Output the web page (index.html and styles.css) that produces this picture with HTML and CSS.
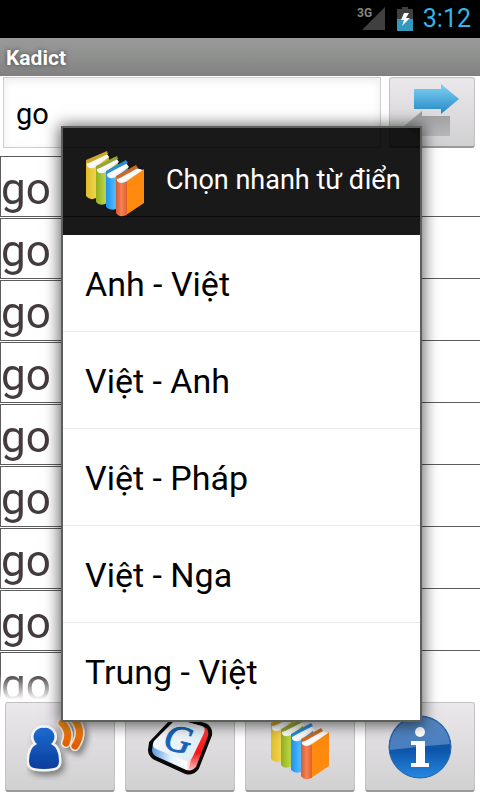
FILE: index.html
```
<!DOCTYPE html>
<html lang="vi">
<head>
    <meta charset="UTF-8">
    <meta name="viewport" content="width=device-width, initial-scale=1.0">
    <title>Kadict</title>
    <link rel="stylesheet" href="styles.css">
</head>
<body>
    <svg class="defs" aria-hidden="true">
        <defs>
            <linearGradient id="yellow"><stop offset="0" stop-color="#dfbd29"/><stop offset="0.4" stop-color="#f0d24c"/><stop offset="1" stop-color="#d9aa1c"/></linearGradient>
            <linearGradient id="green"><stop offset="0" stop-color="#91ae1e"/><stop offset="0.4" stop-color="#b9d344"/><stop offset="1" stop-color="#8caa13"/></linearGradient>
            <linearGradient id="blue"><stop offset="0" stop-color="#1b91ee"/><stop offset="0.4" stop-color="#51b8ff"/><stop offset="1" stop-color="#1488ee"/></linearGradient>
            <linearGradient id="orange"><stop offset="0" stop-color="#d95a2e"/><stop offset="0.5" stop-color="#f58255"/><stop offset="1" stop-color="#e0602a"/></linearGradient>
            <linearGradient id="pages" x1="0" y1="0" x2="1" y2="1"><stop offset="0" stop-color="#d4d4d4"/><stop offset="0.5" stop-color="#ffffff"/><stop offset="1" stop-color="#c4c4c4"/></linearGradient>
            <symbol id="books" viewBox="0 0 58 66">
                <path d="M0 11 20 2l3 4v36L10 47q-6 3-10-2z" fill="url(#yellow)"/>
                <path d="M1 12 20 2l3 4-13 10q-6 3-9-1z" fill="url(#pages)"/>
                <path d="M0 12V9L21 0l1 3L3 12z" fill="#cda62d"/>
                <path d="M10 17 29 7l3 4v36l-13 6q-6 2-9-2z" fill="url(#green)"/>
                <path d="M11 18 30 7l3 4-13 10q-6 3-9-1z" fill="url(#pages)"/>
                <path d="M10 18v-3L31 5l1 3-18 9z" fill="#91a932"/>
                <path d="M20 22 39 12l3 4v36l-12 6q-6 2-10-2z" fill="url(#blue)"/>
                <path d="M21 23 40 12l3 4-13 10q-6 3-9-1z" fill="url(#pages)"/>
                <path d="M20 23v-3L40 9l2 3-18 9z" fill="#288dd4"/>
                <path d="M39 31 58 18v34L40 64z" fill="#ff8a0d"/>
                <path d="M30 28q5 5 11 3v33q-8 3-11-2z" fill="url(#orange)"/>
                <path d="M31 28 50 17l7 2-16 11q-6 4-10 0z" fill="url(#pages)"/>
                <path d="M30 28v-3l20-11 2 3-18 10z" fill="#c96a2b"/>
            </symbol>
        </defs>
    </svg>

    <div class="status-bar">
        <svg class="signal" viewBox="0 0 29 26" role="img" aria-label="3G">
            <text class="signal-text" x="0" y="11">3G</text>
            <path d="M28 1v23H5z" fill="#404040"/>
        </svg>
        <svg class="battery" viewBox="0 0 16 24" role="img" aria-label="Battery charging">
            <path d="M5 0h6v2h5v10H0V2h5z" fill="#404040"/>
            <path d="M0 12h16v12H0z" fill="#3598bd"/>
            <path d="M7 6h5L9 11h4L5 19l2-6H4z" fill="#fff"/>
        </svg>
        <span class="clock">3:12</span>
    </div>
    <h1 class="title-bar">Kadict</h1>

    <main class="main">
        <form class="search" onsubmit="event.preventDefault();">
            <input class="search-input" type="text" value="go" aria-label="Tra từ">
            <button class="btn btn-swap" type="button" aria-label="Đổi chiều">
                <svg viewBox="0 0 60 60" width="60" height="60">
                    <defs>
                        <linearGradient id="arrowBlue" x2="0" y2="1"><stop offset="0" stop-color="#82d2f5"/><stop offset="1" stop-color="#2488c5"/></linearGradient>
                        <linearGradient id="arrowGray" x2="0" y2="1"><stop offset="0" stop-color="#9c9c9e"/><stop offset="1" stop-color="#bcbcbe"/></linearGradient>
                    </defs>
                    <path d="M12 7h27V2l18 15-18 15v-5H12z" fill="url(#arrowBlue)"/>
                    <path d="M48 34H20v-5L2 44l18 14v-4h28z" fill="url(#arrowGray)"/>
                </svg>
            </button>
        </form>
        <ul class="words">
            <li class="word"><span class="word-text">go</span></li>
            <li class="word"><span class="word-text">go</span></li>
            <li class="word"><span class="word-text">go</span></li>
            <li class="word"><span class="word-text">go</span></li>
            <li class="word"><span class="word-text">go</span></li>
            <li class="word"><span class="word-text">go</span></li>
            <li class="word"><span class="word-text">go</span></li>
            <li class="word"><span class="word-text">go</span></li>
            <li class="word"><span class="word-text">go</span></li>
        </ul>
    </main>

    <nav class="toolbar">
        <button class="btn" type="button" aria-label="Phát âm">
            <svg viewBox="0 0 66 66" width="66" height="66">
                <defs>
                    <linearGradient id="person" x2="0" y2="1"><stop offset="0" stop-color="#1d6bd0"/><stop offset="1" stop-color="#0a3d9c"/></linearGradient>
                    <linearGradient id="wave" x2="0" y2="1"><stop offset="0" stop-color="#f59a1c"/><stop offset="1" stop-color="#e25a04"/></linearGradient>
                    <filter id="shade" x="-30%" y="-30%" width="170%" height="170%"><feDropShadow dx="3" dy="4" stdDeviation="3" flood-color="#555" flood-opacity="0.7"/></filter>
                </defs>
                <g filter="url(#shade)">
                    <path d="M17 14a9 9 0 0 1 7 16q8 4 8 17 0 6-5 7-10 2-20 0-5-1-5-7 0-13 8-17a9 9 0 0 1 7-16z" fill="url(#person)" stroke="#f2f4f8" stroke-width="5" stroke-linejoin="round" paint-order="stroke"/>
                    <path d="M35 9q9 9 4 20M46 4q12 13 2 28" fill="none" stroke="#f2e5db" stroke-width="10" stroke-linecap="round"/>
                </g>
                <path d="M35 9q9 9 4 20M46 4q12 13 2 28" fill="none" stroke="url(#wave)" stroke-width="7" stroke-linecap="round"/>
            </svg>
        </button>
        <button class="btn" type="button" aria-label="Google">
            <svg viewBox="0 0 66 66" width="66" height="66">
                <defs>
                    <linearGradient id="keyFront"><stop offset="0" stop-color="#4b91da"/><stop offset="0.35" stop-color="#e4f2ff"/><stop offset="0.6" stop-color="#fff"/><stop offset="0.8" stop-color="#f66"/><stop offset="1" stop-color="#f01818"/></linearGradient>
                    <linearGradient id="keyTop" x2="1" y2="1"><stop offset="0" stop-color="#fff"/><stop offset="1" stop-color="#d9e9f5"/></linearGradient>
                    <linearGradient id="keySide" x2="0" y2="1"><stop offset="0" stop-color="#ff3b3b"/><stop offset="0.6" stop-color="#f91414"/><stop offset="1" stop-color="#ffb3b3"/></linearGradient>
                </defs>
                <path d="M24 8q3-5 9-4l25 7q6 3 5 10L50 54q-4 6-11 4L8 44q-5-3-5-8l1-7z" fill="url(#keyFront)" stroke="#080808" stroke-width="4"/>
                <path d="M59 14q3 3 2 8L49 53q-3 3-7 2l2-9 12-30z" fill="url(#keySide)"/>
                <path d="M25 9q3-4 8-3l22 6q4 2 2 7L46 42q-3 6-9 4L9 35q-5-3-2-8z" fill="url(#keyTop)"/>
                <text class="key-letter" x="17" y="38" transform="rotate(14 32 28)">G</text>
            </svg>
        </button>
        <button class="btn" type="button" aria-label="Chọn từ điển">
            <svg class="books"><use href="#books"/></svg>
        </button>
        <button class="btn" type="button" aria-label="Thông tin">
            <svg viewBox="0 0 66 66" width="66" height="66">
                <defs>
                    <linearGradient id="infoBall" x2="0" y2="1"><stop offset="0" stop-color="#1b5da9"/><stop offset="0.55" stop-color="#0d55ab"/><stop offset="1" stop-color="#2589e0"/></linearGradient>
                </defs>
                <circle cx="33" cy="33" r="31" fill="url(#infoBall)" stroke="#2763a5"/>
                <path d="M3 36a30 30 0 0 1 60-6Q35 32 3 36z" fill="#fff" opacity="0.25"/>
                <circle cx="33" cy="18" r="5" fill="#fff"/>
                <path d="M24 27h14v22h4v4H24v-4h5V31h-5z" fill="#fff"/>
            </svg>
        </button>
    </nav>

    <div class="overlay">
        <section class="dialog" role="dialog" aria-labelledby="dialogTitle">
            <header class="dialog-header">
                <svg class="books"><use href="#books"/></svg>
                <h2 class="dialog-title" id="dialogTitle">Chọn nhanh từ điển</h2>
            </header>
            <div class="options">
                <button class="option" type="button">Anh - Việt</button>
                <button class="option" type="button">Việt - Anh</button>
                <button class="option" type="button">Việt - Pháp</button>
                <button class="option" type="button">Việt - Nga</button>
                <button class="option" type="button">Trung - Việt</button>
            </div>
        </section>
    </div>
</body>
</html>
```
FILE: styles.css
```
* {
    box-sizing: border-box;
}
body {
    display: flex;
    flex-direction: column;
    height: 100vh;
    margin: 0;
    overflow: hidden;
    background-color: #fff;
    font-family: Roboto, "Noto Sans", sans-serif;
}
button, input {
    font-family: inherit;
}
.defs {
    position: absolute;
    width: 0;
    height: 0;
}

/* top bars */
.status-bar {
    display: flex;
    flex: none;
    align-items: center;
    justify-content: flex-end;
    height: 38px;
    padding-right: 9px;
    background-color: #000;
}
.signal {
    width: 29px;
    height: 26px;
    margin-right: 11px;
}
.signal-text {
    font-size: 12px;
    font-weight: 700;
    fill: #858585;
}
.battery {
    width: 16px;
    height: 24px;
    margin-right: 10px;
}
.clock {
    color: #33b5e5;
    font-size: 25px;
    line-height: 40px;
}
.title-bar {
    flex: none;
    height: 38px;
    margin: 0;
    padding-left: 6px;
    background: linear-gradient(#9a999a, #8f918f 45%, #818081);
    color: #fff;
    font-size: 21px;
    line-height: 40px;
    text-shadow: 0 0 4px #444;
}

/* search and word list */
.main {
    display: flex;
    flex: 1;
    flex-direction: column;
    min-height: 0;
}
.search {
    display: flex;
    flex: none;
    gap: 8px;
    padding: 1px 5px 8px 3px;
}
.search-input {
    flex: 1;
    min-width: 0;
    height: 71px;
    padding: 2px 12px 0;
    border: 1px solid #d0cdd0;
    background-color: #fff;
    box-shadow: inset 0 3px 8px #eeebed;
    color: #000;
    font-size: 29px;
}
.btn {
    display: flex;
    align-items: center;
    justify-content: center;
    min-width: 0;
    padding: 0;
    border: 1px solid #c3c1c3;
    border-bottom: 2px solid #9b999b;
    border-radius: 3px;
    background: linear-gradient(#ebe8eb, #d1d0d1);
}
.btn-swap {
    width: 86px;
    height: 71px;
}
.words {
    flex: 1;
    min-height: 0;
    margin: 0;
    padding: 0;
    overflow: hidden;
    list-style: none;
    mask-image: linear-gradient(#000 calc(100% - 26px), transparent);
}
.word {
    height: 61px;
    margin-bottom: 1px;
    border-bottom: 1px solid #5c5c5c;
}
.word-text {
    display: block;
    width: 13%;
    height: 60px;
    border-top: 1px solid #5c5c5c;
    border-left: 1px solid #5c5c5c;
    color: #443b3e;
    font-size: 44px;
    line-height: 64px;
}

/* bottom buttons */
.toolbar {
    display: grid;
    flex: none;
    grid-template-columns: repeat(4, 1fr);
    gap: 10px;
    padding: 2px 5px 8px;
}
.toolbar .btn {
    height: 90px;
}
.books {
    flex: none;
    width: 58px;
    height: 66px;
}
.key-letter {
    font-family: "Liberation Serif", serif;
    font-size: 38px;
    font-style: italic;
    fill: #1765b8;
    stroke: #1765b8;
}

/* dictionary chooser */
.overlay {
    position: absolute;
    inset: 48px 0 0;
    display: flex;
    align-items: center;
    justify-content: center;
    padding: 0 58px 0 61px;
}
.dialog {
    flex: 1;
    border: 2px solid #5b605b;
    box-shadow: 0 1px 14px 2px rgba(0, 0, 0, 0.6);
}
.dialog-header {
    display: flex;
    align-items: center;
    gap: 22px;
    height: 107px;
    padding-left: 23px;
    background-color: rgba(0, 0, 0, 0.9);
}
.dialog-header .books {
    margin-top: 4px;
}
.dialog-title {
    margin: 0 0 4px;
    color: #fff;
    font-size: 27px;
    font-weight: 400;
    line-height: 32px;
    white-space: nowrap;
}
.option {
    display: block;
    width: 100%;
    height: 97px;
    padding: 2px 22px 0;
    border: 0;
    border-bottom: 1px solid #ece9ea;
    background-color: #fff;
    color: #000;
    font-size: 34px;
    text-align: left;
}
.option:last-child {
    border-bottom-color: #fff;
}
```
